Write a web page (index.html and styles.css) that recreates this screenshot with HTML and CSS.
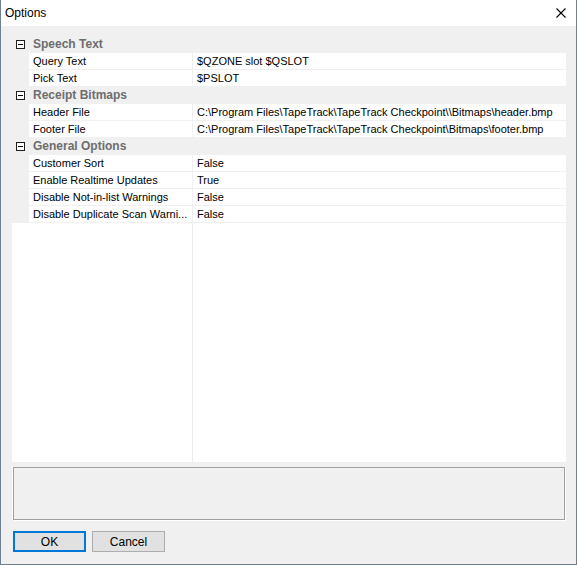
FILE: index.html
```html
<!DOCTYPE html>
<html>
<head>
  <title>Options</title>
  <link rel="stylesheet" href="styles.css">
</head>
<body>
  <div class="window">
    <div class="titlebar">
      <span class="title">Options</span>
      <svg class="close" width="10" height="10" viewBox="0 0 10 10">
        <path d="M0.5 0.5 L9.5 9.5 M9.5 0.5 L0.5 9.5" stroke="#000" stroke-width="1.1" fill="none"/>
      </svg>
    </div>

    <div class="content">
      <div class="grid">
        <div class="category"><span class="expander"></span>Speech Text</div>
        <div class="prop"><div class="name">Query Text</div><div class="value">$QZONE slot $QSLOT</div></div>
        <div class="prop"><div class="name">Pick Text</div><div class="value">$PSLOT</div></div>

        <div class="category"><span class="expander"></span>Receipt Bitmaps</div>
        <div class="prop"><div class="name">Header File</div><div class="value">C:\Program Files\TapeTrack\TapeTrack Checkpoint\\Bitmaps\header.bmp</div></div>
        <div class="prop"><div class="name">Footer File</div><div class="value">C:\Program Files\TapeTrack\TapeTrack Checkpoint\Bitmaps\footer.bmp</div></div>

        <div class="category"><span class="expander"></span>General Options</div>
        <div class="prop"><div class="name">Customer Sort</div><div class="value">False</div></div>
        <div class="prop"><div class="name">Enable Realtime Updates</div><div class="value">True</div></div>
        <div class="prop"><div class="name">Disable Not-in-list Warnings</div><div class="value">False</div></div>
        <div class="prop"><div class="name">Disable Duplicate Scan Warni...</div><div class="value">False</div></div>

        <div class="empty"><div class="empty-left"></div></div>
      </div>

      <div class="description"></div>

      <div class="buttons">
        <button class="btn default">OK</button>
        <button class="btn">Cancel</button>
      </div>
    </div>
  </div>
</body>
</html>
```

FILE: styles.css
```css
body {
  margin: 0;
  background: #f0f0f0;
}

.window {
  width: 577px;
  height: 565px;
  box-sizing: border-box;
  border: 1px solid #6f7f92;
  border-top: none;
  background: #f0f0f0;
  display: flex;
  flex-direction: column;
  font-family: "Liberation Sans", Arial, sans-serif;
}

.titlebar {
  height: 26px;
  background: #fff;
  display: flex;
  align-items: center;
  justify-content: space-between;
  padding: 0 10px 0 4px;
}

.title {
  font-size: 12px;
  color: #000;
}

.content {
  padding: 10px 10px 0 11px;
}

.grid {
  font-size: 11px;
  color: #000;
}

.category {
  height: 16px;
  line-height: 17px;
  border-bottom: 1px solid #f0f0f0;
  font-size: 12px;
  font-weight: bold;
  color: #6d6d6d;
  display: flex;
  align-items: center;
}

.expander {
  width: 7px;
  height: 7px;
  border: 1px solid #1e1e1e;
  margin: 0 8px 0 4px;
  position: relative;
  background: #fff;
}

.expander::after {
  content: "";
  position: absolute;
  left: 1px;
  top: 3px;
  width: 5px;
  height: 1px;
  background: #000;
}

.prop {
  display: flex;
  height: 16px;
  line-height: 17px;
  border-bottom: 1px solid #f0f0f0;
  padding-left: 17px;
}

.prop .name {
  width: 159px;
  padding-left: 4px;
  background: #fff;
  border-right: 1px solid #f0f0f0;
  white-space: nowrap;
  overflow: hidden;
}

.prop .value {
  flex: 1;
  padding-left: 4px;
  background: #fff;
  white-space: nowrap;
  overflow: hidden;
}

.empty {
  height: 239px;
  background: #fff;
}

.empty-left {
  width: 180px;
  height: 100%;
  border-right: 1px solid #ececec;
}

.description {
  margin: 5px 1px 0 1px;
  height: 51px;
  border: 1px solid #a0a0a0;
  box-shadow: -1px 0 0 #fff, 1px 1px 0 #fff;
}

.buttons {
  display: flex;
  gap: 6px;
  margin: 11px 0 0 1px;
}

.btn {
  width: 73px;
  height: 21px;
  box-sizing: border-box;
  border: 1px solid #adadad;
  background: #e1e1e1;
  font-family: "Liberation Sans", Arial, sans-serif;
  font-size: 12px;
  color: #000;
  padding: 0;
}

.btn.default {
  border: 2px solid #0078d7;
}
```
